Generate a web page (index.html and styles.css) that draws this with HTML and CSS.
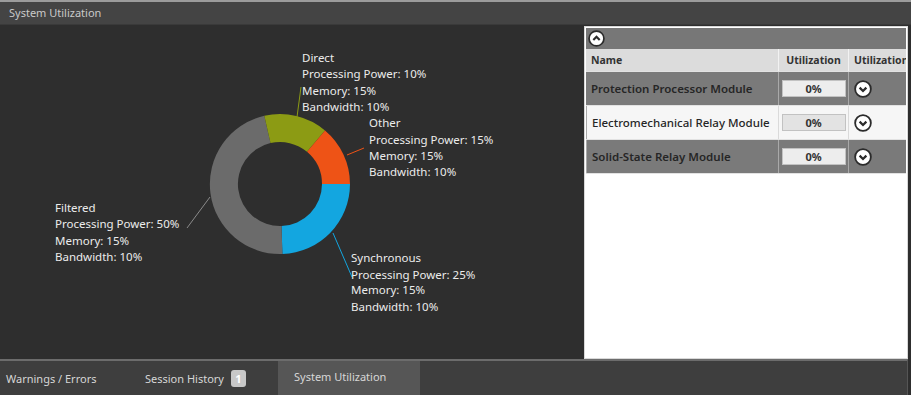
FILE: index.html
```html
<!DOCTYPE html>
<html lang="en">
<head>
    <meta charset="UTF-8">
    <title>System Utilization</title>
    <link rel="stylesheet" href="styles.css">
</head>
<body>
    <div class="title-bar">System Utilization</div>

    <div class="main">
        <div class="chart">
            <svg class="donut" width="584" height="334" viewBox="0 25 584 334">
                <path class="seg-blue" d="M350 184 A70 70 0 0 1 282.4 254 L281.5 226 A42 42 0 0 0 322 184Z"/>
                <path class="seg-gray" d="M282.4 254 A70 70 0 0 1 264.3 115.8 L270.5 143.1 A42 42 0 0 0 281.5 226Z"/>
                <path class="seg-green" d="M264.3 115.8 A70 70 0 0 1 325 130.4 L307 151.8 A42 42 0 0 0 270.5 143.1Z"/>
                <path class="seg-orange" d="M325 130.4 A70 70 0 0 1 350 184 L322 184 A42 42 0 0 0 307 151.8Z"/>

                <line class="lead-green" x1="297" y1="117" x2="301" y2="87"/>
                <line class="lead-orange" x1="347" y1="155" x2="364" y2="148"/>
                <line class="lead-gray" x1="210" y1="197" x2="187" y2="228"/>
                <line class="lead-blue" x1="333" y1="233" x2="352" y2="277"/>

                <text class="label" x="302" y="62">Direct</text>
                <text class="label" x="302" y="78">Processing Power: 10%</text>
                <text class="label" x="302" y="95">Memory: 15%</text>
                <text class="label" x="302" y="111">Bandwidth: 10%</text>

                <text class="label" x="369" y="127">Other</text>
                <text class="label" x="369" y="144">Processing Power: 15%</text>
                <text class="label" x="369" y="160">Memory: 15%</text>
                <text class="label" x="369" y="176">Bandwidth: 10%</text>

                <text class="label" x="55" y="212">Filtered</text>
                <text class="label" x="55" y="228">Processing Power: 50%</text>
                <text class="label" x="55" y="245">Memory: 15%</text>
                <text class="label" x="55" y="261">Bandwidth: 10%</text>

                <text class="label" x="351" y="262">Synchronous</text>
                <text class="label" x="351" y="279">Processing Power: 25%</text>
                <text class="label" x="351" y="294">Memory: 15%</text>
                <text class="label" x="351" y="311">Bandwidth: 10%</text>
            </svg>
        </div>

        <div class="panel">
            <div class="panel-top">
                <svg class="circle-btn" width="17" height="17" viewBox="0 0 16 16">
                    <circle cx="8" cy="8" r="7" fill="#fff" stroke="#2b2b2b" stroke-width="1.6"/>
                    <path d="M5 9.4 L8 6.4 L11 9.4" fill="none" stroke="#2b2b2b" stroke-width="2"/>
                </svg>
            </div>
            <div class="grid">
                <div class="head">Name</div>
                <div class="head center">Utilization</div>
                <div class="head">Utilization</div>

                <div class="cell dark">Protection Processor Module</div>
                <div class="cell dark center"><span class="pct">0%</span></div>
                <div class="cell dark">
                    <svg class="circle-btn" width="18" height="18" viewBox="0 0 16 16">
                        <circle cx="8" cy="8" r="7" fill="#fff" stroke="#2b2b2b" stroke-width="1.6"/>
                        <path d="M5 6.8 L8 9.8 L11 6.8" fill="none" stroke="#2b2b2b" stroke-width="2"/>
                    </svg>
                </div>

                <div class="cell light">Electromechanical Relay Module</div>
                <div class="cell light center"><span class="pct">0%</span></div>
                <div class="cell light">
                    <svg class="circle-btn" width="18" height="18" viewBox="0 0 16 16">
                        <circle cx="8" cy="8" r="7" fill="#fff" stroke="#2b2b2b" stroke-width="1.6"/>
                        <path d="M5 6.8 L8 9.8 L11 6.8" fill="none" stroke="#2b2b2b" stroke-width="2"/>
                    </svg>
                </div>

                <div class="cell dark">Solid-State Relay Module</div>
                <div class="cell dark center"><span class="pct">0%</span></div>
                <div class="cell dark">
                    <svg class="circle-btn" width="18" height="18" viewBox="0 0 16 16">
                        <circle cx="8" cy="8" r="7" fill="#fff" stroke="#2b2b2b" stroke-width="1.6"/>
                        <path d="M5 6.8 L8 9.8 L11 6.8" fill="none" stroke="#2b2b2b" stroke-width="2"/>
                    </svg>
                </div>
            </div>
        </div>
    </div>

    <div class="tabs">
        <div class="tab first">Warnings / Errors</div>
        <div class="tab second">Session History <span class="badge">1</span></div>
        <div class="tab active">System Utilization</div>
    </div>
</body>
</html>
```

FILE: styles.css
```css
* {
    margin: 0;
    padding: 0;
    box-sizing: border-box;
}

body {
    background-color: #2e2e2e;
    font-family: 'Noto Sans', 'Open Sans', sans-serif;
    width: 911px;
    height: 395px;
    overflow: hidden;
}

.title-bar {
    height: 25px;
    border-top: 2px solid #9c9c9c;
    border-bottom: 1px solid #3a3a3a;
    background-color: #444;
    color: #c9c9c9;
    font-size: 11px;
    line-height: 21px;
    padding-left: 9px;
}

.main {
    display: flex;
    height: 334px;
}

.chart {
    width: 584px;
}

.donut .label {
    fill: #ececec;
    font-size: 11.5px;
    font-family: 'Noto Sans', 'Open Sans', sans-serif;
}

.seg-blue { fill: #13a6e0; }
.seg-gray { fill: #6b6b6b; }
.seg-green { fill: #8c9b14; }
.seg-orange { fill: #ee5316; }

.lead-green { stroke: #8c9b14; stroke-width: 1; }
.lead-orange { stroke: #ee5316; stroke-width: 1; }
.lead-gray { stroke: #8a8a8a; stroke-width: 1; }
.lead-blue { stroke: #13a6e0; stroke-width: 1; }

.panel {
    width: 324px;
    margin-top: 1px;
    background-color: #fff;
    border: 1px solid #d8d8d8;
    padding: 1px;
    overflow: hidden;
}

.panel-top {
    height: 21px;
    background-color: #777;
    padding: 2px 0 0 2px;
}

.circle-btn {
    display: block;
}

.grid {
    display: grid;
    grid-template-columns: 192px 70px 1fr;
    grid-template-rows: 22px 33px 33px 33px;
    row-gap: 1px;
    background-color: #e2e2e2;
    padding-bottom: 1px;
}

.head {
    background-color: #dcdcdc;
    font-size: 10.5px;
    font-weight: 700;
    color: #333;
    padding-left: 5px;
    line-height: 22px;
    white-space: nowrap;
    overflow: hidden;
}

.head + .head {
    border-left: 1px solid #f2f2f2;
}

.cell {
    display: flex;
    align-items: center;
    font-size: 11.5px;
    font-weight: 600;
    color: #262626;
    padding-left: 5px;
    white-space: nowrap;
    overflow: hidden;
}

.cell + .cell {
    border-left: 1px solid #a9a9a9;
}

.cell.light + .cell.light {
    border-left: 1px solid #dadada;
}

.center {
    justify-content: center;
    padding: 0 2px 0 2px;
}

.head.center {
    text-align: center;
}

.dark {
    background-color: #7a7a7a;
}

.light {
    background-color: #f6f6f6;
    font-weight: 500;
}

.pct {
    display: block;
    width: 64px;
    height: 17px;
    background-color: #ededed;
    border: 1px solid #c2c2c2;
    font-size: 11px;
    font-weight: 700;
    color: #333;
    text-align: center;
    line-height: 15px;
}

.light .pct {
    background-color: #e3e3e3;
}

.tabs {
    display: flex;
    height: 36px;
    margin-right: 3px;
    border-top: 2px solid #6c6c6c;
    border-right: 1px solid #555;
    background-color: #3e3e3e;
}

.tab {
    display: flex;
    align-items: center;
    color: #d6d6d6;
    font-size: 11px;
    padding-top: 1px;
}

.tab.first {
    width: 139px;
    padding-left: 6px;
}

.tab.second {
    width: 139px;
    padding-left: 6px;
}

.badge {
    display: inline-block;
    width: 15px;
    height: 17px;
    margin-left: 7px;
    border-radius: 3px;
    background-color: #c8c8c8;
    color: #fff;
    font-weight: 700;
    text-align: center;
    line-height: 17px;
}

.tab.active {
    width: 142px;
    padding-left: 16px;
    padding-top: 0;
    padding-bottom: 4px;
    background-color: #565656;
}
```
